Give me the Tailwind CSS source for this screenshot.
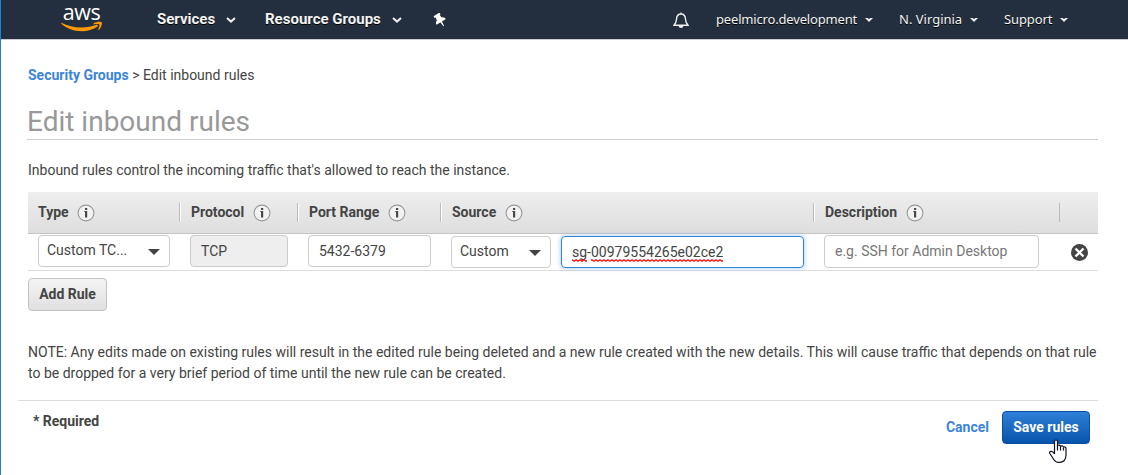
<!DOCTYPE html>
<html lang="en">
<head>
<meta charset="utf-8">
<title>Edit inbound rules</title>
<script src="https://cdn.jsdelivr.net/npm/@tailwindcss/browser@4"></script>
</head>
<body class="w-[1128px] h-[475px] overflow-hidden bg-white border-l border-[#1684dc] font-['Roboto',sans-serif] text-[14px] leading-[21px] text-[#444]">
<svg class="absolute w-0 h-0">
  <defs><pattern id="zig" width="4" height="3" patternUnits="userSpaceOnUse"><path d="M-1 1.500L0 .7 2 2.300 4 .7 5 1.500" fill="none" stroke="#f00" stroke-width="1.100"/></pattern></defs>
  <symbol id="info" viewBox="0 0 18 18"><circle cx="9" cy="9" r="7.900" fill="#f2f2f2" stroke="#999" stroke-width="1.100"/><path d="M8 4h2.200v2H8zM7.300 7h2.900v6.500H8V8h-.7z" fill="#4a4a4a"/></symbol>
  <symbol id="chev" viewBox="0 0 10 6"><path d="M1 1l4 3.600L9 1" fill="none" stroke="#eee" stroke-width="2"/></symbol>
  <symbol id="tri" viewBox="0 0 8 4"><path d="M0 0h2.500l1.500 1 1.500-1H8L4 4z" fill="#eee"/></symbol>
  <symbol id="drop" viewBox="0 0 12 6"><path d="M0 0h12L6 6z" fill="#444"/></symbol>
</svg>
<header class="h-[40px] bg-[#232f3e] border-b border-[#c8cbd0] flex text-[#f3f3f3] [text-shadow:0_1px_0_#000]">
  <div class="w-[41px] ml-[60px] mr-[55px] pt-[2px]">
    <div class="h-[19px] leading-[19px] text-[21.500px] font-medium font-['Open_Sans',sans-serif] text-white text-center [text-shadow:none] tracking-[-0.4px]">aws</div>
    <svg class="w-[41px] h-[11px]" viewBox="0 0 41 11"><path d="M.3 1.800C11 7.400 25 8 36 3.600l1 1.700C26 13 10 11.500 .3 2.800z" fill="#f90"/><path d="M32.500 2.400c3-1.700 8-2 8.300-.9.400 1.900-.8 5.600-2.900 7.500l-.8-.4c.7-1.700 1.800-4.400 1.200-5.100s-4-.3-6-.1z" fill="#f90"/></svg>
  </div>
  <div class="flex items-center h-[39px] font-bold text-[15px]">
    <span class="w-[69px]">Services</span><svg class="w-[10px] h-[6px] mt-px"><use href="#chev"/></svg>
    <span class="w-[127px] ml-[29px] whitespace-nowrap">Resource Groups</span><svg class="w-[10px] h-[6px] mt-px"><use href="#chev"/></svg>
    <svg class="w-[14px] h-[14px] ml-[31px]" viewBox="0 0 14 14"><g transform="translate(7 7) rotate(-32)" fill="#fff"><path d="M-3.500-6.600h7v2.100h-1.100l.4 3.200q2.700.9 2.700 3.600h-11q0-2.700 2.700-3.600l.4-3.200h-1.100zM-.9 2h1.800L.4 7h-.8z"/></g></svg>
  </div>
  <div class="flex items-center h-[39px] ml-auto mr-[60px] font-['Noto_Sans',sans-serif] text-[13px]">
    <svg class="w-[16px] h-[18px] mr-[27px]" viewBox="0 0 16 18"><path d="M8 1.500v1M1 14.200c2-2 2.300-3 2.500-6C3.700 4.500 5.500 3 8 3s4.300 1.500 4.500 5.200c.2 3 .5 4 2.500 6z" fill="none" stroke="#eee" stroke-width="1.400"/><path d="M5.500 14.500h5C10.300 16.200 9.300 17 8 17s-2.300-.8-2.500-2.500z" fill="#eee"/></svg>
    <span class="w-[149px] tracking-[-0.17px]">peelmicro.development</span><svg class="w-[8px] h-[4px] mt-px"><use href="#tri"/></svg>
    <span class="w-[71px] ml-[26px]">N. Virginia</span><svg class="w-[8px] h-[4px] mt-px"><use href="#tri"/></svg>
    <span class="w-[56px] ml-[26px] tracking-[-0.1px]">Support</span><svg class="w-[8px] h-[4px] mt-px"><use href="#tri"/></svg>
  </div>
</header>
<main class="ml-[27px] w-[1070px]">
  <nav class="pt-[25px]"><a class="font-bold text-[#3b84db]">Security Groups</a> &gt; Edit inbound rules</nav>
  <h1 class="mt-[18px] -ml-px h-[36px] leading-[36px] text-[28px] text-[#999] border-b border-[#ccc]">Edit inbound rules</h1>
  <p class="mt-[20px]">Inbound rules control the incoming traffic that's allowed to reach the instance.</p>
  <div class="mt-[11px] h-[42px] flex items-center bg-linear-to-b from-[#eee] to-[#dedede] border-b border-[#c4c4c4] font-bold">
    <div class="w-[152px] h-[19px] pl-[10px] flex items-center border-r border-[#bbb]">Type<svg class="w-[18px] h-[18px] ml-[8.500px]"><use href="#info"/></svg></div>
    <div class="w-[118px] h-[19px] pl-[10px] flex items-center border-r border-[#bbb] border-l border-l-white">Protocol<svg class="w-[18px] h-[18px] ml-[8.500px]"><use href="#info"/></svg></div>
    <div class="w-[143px] h-[19px] pl-[10px] flex items-center border-r border-[#bbb] border-l border-l-white">Port Range<svg class="w-[18px] h-[18px] ml-[8.500px]"><use href="#info"/></svg></div>
    <div class="w-[373px] h-[19px] pl-[10px] flex items-center border-r border-[#bbb] border-l border-l-white">Source<svg class="w-[18px] h-[18px] ml-[8.500px]"><use href="#info"/></svg></div>
    <div class="w-[246px] h-[19px] pl-[10px] flex items-center border-r border-[#bbb] border-l border-l-white">Description<svg class="w-[18px] h-[18px] ml-[8.500px]"><use href="#info"/></svg></div>
  </div>
  <div class="h-[37px] flex items-start pl-[10px] pt-px border-b border-[#ddd]">
    <div class="w-[132px] h-[32px] mr-[20px] border border-[#ccc] rounded-[4px] flex items-center pl-[8px] pr-[9px]"><span class="flex-1 -mt-px">Custom TC...</span><svg class="w-[12px] h-[6px] mt-[2px]"><use href="#drop"/></svg></div>
    <div class="w-[98px] h-[32px] mr-[20px] border border-[#ccc] rounded-[4px] bg-[#eee] flex items-center pl-[10px]">TCP</div>
    <div class="w-[123px] h-[32px] mr-[20px] border border-[#ccc] rounded-[4px] flex items-center pl-[10px]">5432-6379</div>
    <div class="w-[100px] h-[32px] mt-px mr-[10px] border border-[#ccc] rounded-[4px] flex items-center pl-[8px] pr-[9px]"><span class="flex-1 -mt-px">Custom</span><svg class="w-[12px] h-[6px] mt-[2px]"><use href="#drop"/></svg></div>
    <div class="w-[243px] h-[32px] mt-px mr-[20px] border border-[#2e83dc] rounded-[4px] shadow-[0_0_5px_rgba(46,131,220,0.45)] flex items-center pl-[10px]"><span class="relative">sg-00979554265e02ce2<svg class="absolute left-0 top-[17px] w-[151px] h-[3px]"><path d="M0 0h15v3H0zM19 0h132v3H19z" fill="url(#zig)"/></svg></span></div>
    <div class="w-[215px] h-[33px] mr-[32px] border border-[#ccc] rounded-[4px] flex items-center pl-[10px] text-[#777]">e.g. SSH for Admin Desktop</div>
    <svg class="w-[17px] h-[17px] mt-[9px]" viewBox="0 0 17 17"><circle cx="8.500" cy="8.500" r="8.500" fill="#444"/><path d="M4.500 4.500l8 8M12.500 4.500l-8 8" stroke="#fff" stroke-width="2.300"/></svg>
  </div>
  <button class="block mt-[7px] w-[79px] h-[33px] border border-[#c2c2c2] rounded-[4px] bg-linear-to-b from-[#f4f4f4] to-[#e0e0e0] font-bold text-center">Add Rule</button>
  <p class="mt-[31px]">NOTE: Any edits made on existing rules will result in the edited rule being deleted and a new rule created with the new details. This will cause traffic that depends on that rule<br>to be dropped for a very brief period of time until the new rule can be created.</p>
  <footer class="-ml-[10px] mt-[16px] border-t border-[#ddd] flex font-bold">
    <div class="flex-1 pl-[15px] pt-[10px]">* Required</div>
    <a class="pt-[16px] mr-[13px] text-[#3b84db]">Cancel</a>
    <div class="relative mr-[8px] mt-[10px]">
      <button class="block w-[88px] h-[33px] border border-[#0a4fa0] rounded-[4px] bg-linear-to-b from-[#2e80d8] to-[#0754ac] text-white text-center">Save rules</button>
      <svg class="absolute left-[46px] top-[28px] w-[20px] h-[25px]" viewBox="0 0 20 25"><path d="M6.500 15V2.500q0-1.500 1.500-1.500t1.500 1.500V6.500q2-.8 3 .7 2-.7 3 .8 2.500-.5 2.500 1.700v6q0 7-6 7.600h-2Q7 23.300 4.500 18.500L1.800 14.500Q1 12.500 3 12.300t3.500 2.700z" fill="#fff" stroke="#112" stroke-width="1.200"/><path d="M9.500 6.500v5M12.500 7.500v4M15.500 8.500v3" stroke="#112" stroke-width="1.200"/></svg>
    </div>
  </footer>
</main>
</body>
</html>
